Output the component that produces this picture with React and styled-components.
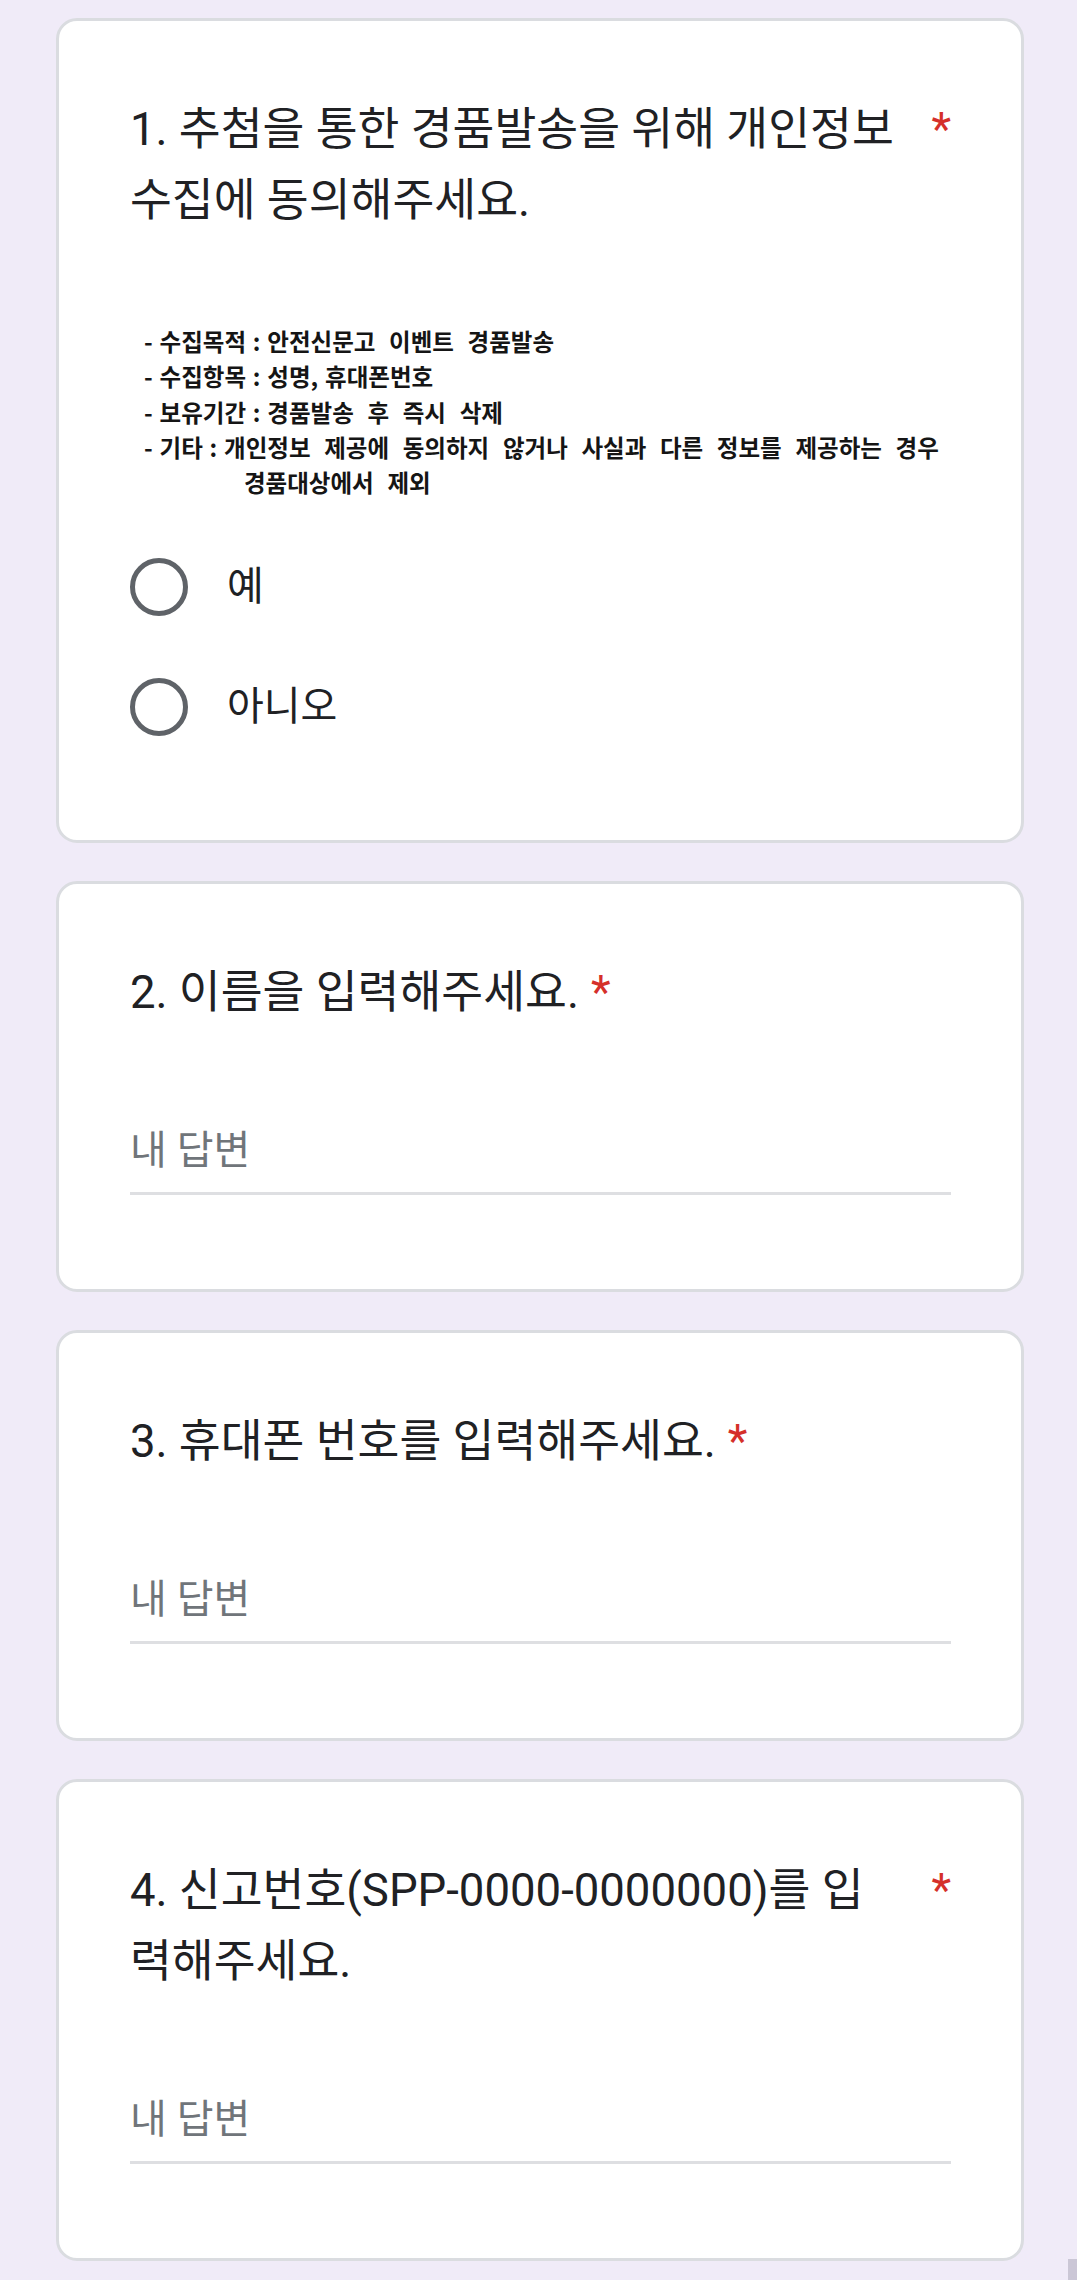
import styled, { createGlobalStyle } from "styled-components";

const GlobalStyle = createGlobalStyle`
  html, body {
    margin: 0;
    padding: 0;
    background: #f0ebf8;
  }
  body {
    font-family: Roboto, "Noto Sans CJK KR", sans-serif;
    color: #202124;
  }
`;

const Page = styled.div`
  width: 1077px;
  box-sizing: border-box;
  padding: 18px 53px 18px 56px;
  display: flex;
  flex-direction: column;
  gap: 38px;
`;

const Card = styled.div`
  background: #fff;
  border: 3px solid #dadce0;
  border-radius: 21px;
  padding: 73px 70px 73px 71px;
`;

const Title = styled.div`
  display: flex;
  align-items: flex-start;
  font-size: 45.5px;
  line-height: 71px;
  color: #202124;
`;

const TitleText = styled.span`
  flex: ${(p) => (p.$wide ? "1 1 auto" : "0 1 auto")};
`;

const Required = styled.span`
  flex: none;
  padding-left: 12px;
  color: #d5302a;
`;

const Notice = styled.div`
  margin-top: 88px;
  font-family: "Noto Sans CJK KR", sans-serif;
  font-size: 23.5px;
  font-weight: 700;
  line-height: 35.25px;
  word-spacing: 1.5px;
  color: #151515;
  padding-left: 14px;
`;

const NoticeLine = styled.div`
  padding-left: ${(p) => (p.$indent ? "100px" : "0")};
  white-space: pre;
`;

const Options = styled.div`
  margin-top: 27px;
`;

const Option = styled.label`
  height: 120px;
  display: flex;
  align-items: center;
  gap: 39px;
`;

const Radio = styled.span`
  width: 58px;
  height: 58px;
  box-sizing: border-box;
  border: 5.5px solid #5f6368;
  border-radius: 50%;
  flex: none;
`;

const OptionLabel = styled.span`
  font-size: 40px;
  line-height: 52px;
  color: #202124;
`;

const Answer = styled.div`
  margin-top: 97px;
  margin-bottom: 21px;
  padding-bottom: 15px;
  border-bottom: 3px solid #dedfe2;
  font-size: 40px;
  line-height: 52px;
  color: #70757a;
`;

const ScrollThumb = styled.div`
  position: fixed;
  right: 0;
  bottom: 0;
  width: 9px;
  height: 21px;
  background: #cbc7d6;
`;

function Question({ wide, children }) {
  return (
    <Title>
      <TitleText $wide={wide}>{children}</TitleText>
      <Required>*</Required>
    </Title>
  );
}

export default function App() {
  return (
    <>
      <GlobalStyle />
      <Page>
        <Card>
          <Question wide>1. 추첨을 통한 경품발송을 위해 개인정보 수집에 동의해주세요.</Question>
          <Notice>
            <NoticeLine>- 수집목적 : 안전신문고  이벤트  경품발송</NoticeLine>
            <NoticeLine>- 수집항목 : 성명, 휴대폰번호</NoticeLine>
            <NoticeLine>- 보유기간 : 경품발송  후  즉시  삭제</NoticeLine>
            <NoticeLine>- 기타 : 개인정보  제공에  동의하지  않거나  사실과  다른  정보를  제공하는  경우</NoticeLine>
            <NoticeLine $indent>경품대상에서  제외</NoticeLine>
          </Notice>
          <Options>
            <Option>
              <Radio />
              <OptionLabel>예</OptionLabel>
            </Option>
            <Option>
              <Radio />
              <OptionLabel>아니오</OptionLabel>
            </Option>
          </Options>
        </Card>

        <Card>
          <Question>2. 이름을 입력해주세요.</Question>
          <Answer>내 답변</Answer>
        </Card>

        <Card>
          <Question>3. 휴대폰 번호를 입력해주세요.</Question>
          <Answer>내 답변</Answer>
        </Card>

        <Card>
          <Question wide>
            4. 신고번호(SPP-0000-0000000)를 입<br />력해주세요.
          </Question>
          <Answer>내 답변</Answer>
        </Card>
      </Page>
      <ScrollThumb />
    </>
  );
}
